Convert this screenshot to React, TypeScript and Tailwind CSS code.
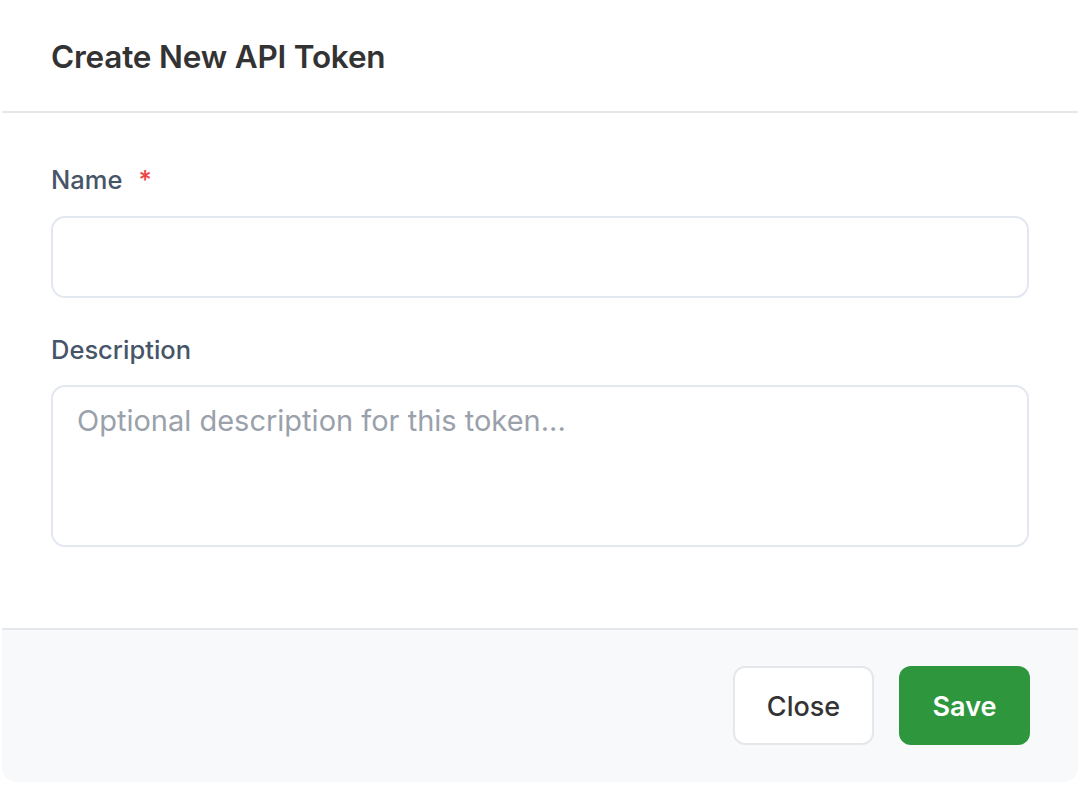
import React from "react";

export default function App() {
  return (
    <div className="w-[1080px] h-[786px] bg-white" style={{ fontFamily: "Inter, 'Noto Sans', sans-serif" }}>
      <div className="ml-[2px] w-[1076px] rounded-b-[14px] overflow-hidden bg-white flex flex-col">
        <div className="h-[113px] border-b-2 border-[#e6e7eb] flex items-center pl-[49px] pt-[3px]">
          <h1 className="text-[31.5px] font-semibold text-[#333333] tracking-[-0.2px] leading-none">Create New API Token</h1>
        </div>
        <div className="h-[515px] px-[49px] pt-[49px] flex flex-col">
          <label className="h-[36px] flex items-center text-[25.5px] font-medium text-[#475569]">
            Name<span className="ml-[16px] text-[#ef4444]">*</span>
          </label>
          <input
            className="mt-[18px] h-[82px] w-full rounded-[14px] border-2 border-[#e3e8f0] bg-white px-[24px] text-[29px] outline-none"
            type="text"
          />
          <label className="mt-[34px] h-[36px] flex items-center text-[25.5px] font-medium text-[#475569]">
            Description
          </label>
          <textarea
            className="mt-[17px] h-[162px] w-full resize-none rounded-[14px] border-2 border-[#e3e8f0] bg-white px-[24px] pt-[13px] text-[29px] leading-[42px] text-[#333] placeholder:text-[#9aa1ab] outline-none"
            placeholder="Optional description for this token..."
          />
        </div>
        <div className="h-[154px] border-t-2 border-[#e6e7eb] bg-[#f8f9fa] flex justify-end items-start pt-[36px] pr-[48px] gap-[25px]">
          <button className="h-[79px] w-[141px] rounded-[12px] border-2 border-[#e6e7eb] bg-white pt-[3px] text-[27px] font-medium text-[#333333]">
            Close
          </button>
          <button className="h-[79px] w-[131px] rounded-[12px] bg-[#2e973e] pt-[3px] text-[27px] font-semibold text-white">
            Save
          </button>
        </div>
      </div>
    </div>
  );
}
